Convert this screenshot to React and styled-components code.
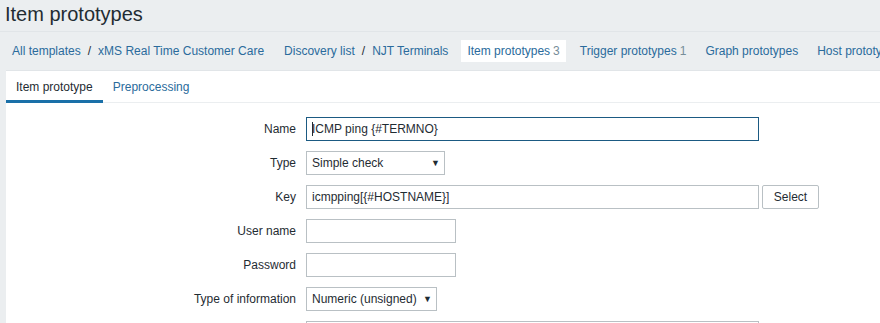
import React from "react";
import styled, { createGlobalStyle } from "styled-components";

const GlobalStyle = createGlobalStyle`
  html, body {
    margin: 0;
    padding: 0;
    background: #ebeef0;
    overflow: hidden;
  }
  body {
    font-family: "Liberation Sans", Arial, sans-serif;
    font-size: 12px;
    color: #1f2c33;
  }
`;

const Page = styled.div`
  width: 880px;
  height: 323px;
  overflow: hidden;
`;

const Header = styled.div`
  height: 32px;
  padding-left: 5px;
  border-bottom: 1px solid #e1e5e8;
  box-sizing: border-box;
`;

const Title = styled.h1`
  margin: 0;
  font-size: 20px;
  font-weight: normal;
  line-height: 29px;
  color: #1f2c33;
`;

const Nav = styled.div`
  display: flex;
  align-items: center;
  height: 38px;
  padding-left: 12px;
  white-space: nowrap;
`;

const Crumbs = styled.div`
  display: flex;
  align-items: center;
  margin-right: 20px;
`;

const Sep = styled.span`
  margin: 0 7px;
  color: #1f2c33;
`;

const NavLink = styled.a`
  color: #2a6b9c;
  text-decoration: none;
`;

const NavTab = styled.span`
  display: inline-flex;
  align-items: center;
  height: 22px;
  padding: ${(p) => (p.$active ? "0 6px" : "0")};
  margin: ${(p) => (p.$active ? "0 14px 0 -7px" : "0 19px 0 0")};
  background: ${(p) => (p.$active ? "#ffffff" : "transparent")};
  color: #2a6b9c;
`;

const Count = styled.span`
  color: #768d99;
  margin-left: 3px;
`;

const Panel = styled.div`
  margin-left: 6px;
  background: #ffffff;
  height: 260px;
  border-top: 1px solid #e1e5e8;
`;

const Tabs = styled.div`
  display: flex;
  height: 31px;
  border-bottom: 1px solid #ebeef0;
`;

const Tab = styled.div`
  padding: 0 10px;
  display: flex;
  align-items: center;
  box-sizing: border-box;
  border-bottom: 3px solid ${(p) => (p.$active ? "#1a70a8" : "transparent")};
  color: ${(p) => (p.$active ? "#1f2c33" : "#2a6b9c")};
  margin-bottom: -1px;
  padding-top: 2px;
`;

const Form = styled.div`
  display: grid;
  grid-template-columns: 290px 1fr;
  row-gap: 10px;
  column-gap: 10px;
  padding-top: 14px;
  align-items: center;
`;

const Label = styled.label`
  text-align: right;
  color: #1f2c33;
`;

const Field = styled.div`
  display: flex;
  align-items: center;
  gap: 3px;
`;

const Input = styled.div`
  box-sizing: border-box;
  width: ${(p) => p.$w}px;
  height: 24px;
  border: 1px solid ${(p) => (p.$focus ? "#1b5a82" : "#b9c0c4")};
  padding: 0 5px;
  display: flex;
  align-items: center;
  background: #fff;
  color: #1f2c33;
`;

const Caret = styled.span`
  display: inline-block;
  width: 1px;
  height: 14px;
  background: #1f2c33;
  margin-right: -1px;
`;

const Select = styled(Input)`
  justify-content: space-between;
  padding-right: 4px;
`;

const Arrow = styled.span`
  font-size: 9px;
  color: #1f2c33;
`;

const Button = styled.div`
  box-sizing: border-box;
  width: 57px;
  height: 24px;
  border: 1px solid #b9c0c4;
  border-radius: 2px;
  display: flex;
  align-items: center;
  justify-content: center;
  background: #fff;
  color: #1f2c33;
`;

const navItems = [
  { label: "Item prototypes", count: 3, active: true },
  { label: "Trigger prototypes", count: 1 },
  { label: "Graph prototypes" },
  { label: "Host prototypes" },
];

export default function App() {
  return (
    <Page>
      <GlobalStyle />
      <Header>
        <Title>Item prototypes</Title>
      </Header>
      <Nav>
        <Crumbs>
          <NavLink>All templates</NavLink>
          <Sep>/</Sep>
          <NavLink>xMS Real Time Customer Care</NavLink>
        </Crumbs>
        <Crumbs>
          <NavLink>Discovery list</NavLink>
          <Sep>/</Sep>
          <NavLink>NJT Terminals</NavLink>
        </Crumbs>
        {navItems.map((item) => (
          <NavTab key={item.label} $active={item.active}>
            {item.label}
            {item.count && <Count>{item.count}</Count>}
          </NavTab>
        ))}
      </Nav>
      <Panel>
        <Tabs>
          <Tab $active>Item prototype</Tab>
          <Tab>Preprocessing</Tab>
        </Tabs>
        <Form>
          <Label>Name</Label>
          <Field>
            <Input $w={453} $focus>
              <Caret />
              ICMP ping {"{#TERMNO}"}
            </Input>
          </Field>
          <Label>Type</Label>
          <Field>
            <Select $w={139}>
              Simple check <Arrow>▼</Arrow>
            </Select>
          </Field>
          <Label>Key</Label>
          <Field>
            <Input $w={453}>icmpping[{"{#HOSTNAME}"}]</Input>
            <Button>Select</Button>
          </Field>
          <Label>User name</Label>
          <Field>
            <Input $w={150} />
          </Field>
          <Label>Password</Label>
          <Field>
            <Input $w={150} />
          </Field>
          <Label>Type of information</Label>
          <Field>
            <Select $w={131}>
              Numeric (unsigned) <Arrow>▼</Arrow>
            </Select>
          </Field>
          <Label>Units</Label>
          <Field>
            <Input $w={453} />
          </Field>
        </Form>
      </Panel>
    </Page>
  );
}
